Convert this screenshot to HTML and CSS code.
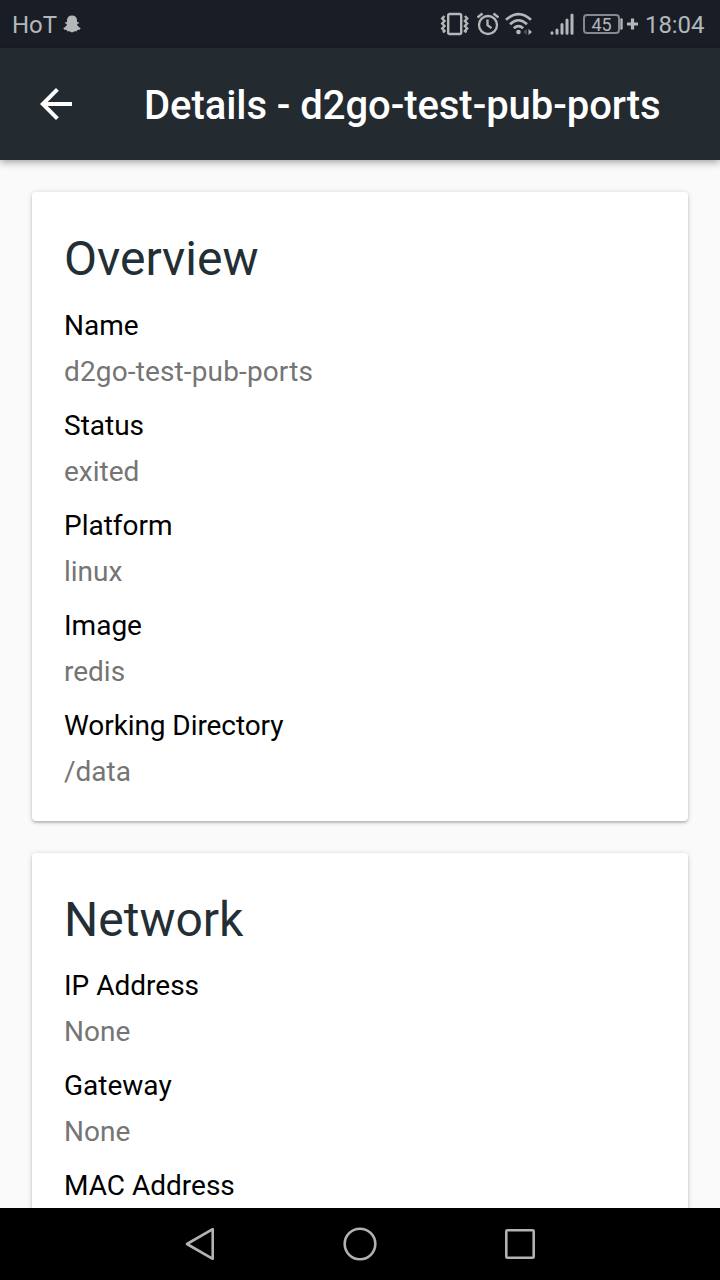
FILE: index.html
```html
<!DOCTYPE html>
<html lang="en">
<head>
<meta charset="utf-8">
<title>Details - d2go-test-pub-ports</title>
<link rel="stylesheet" href="styles.css">
</head>
<body>
<div class="screen">
  <div class="status-bar">
    <span class="carrier">HoT</span>
    <svg class="ghost" width="18" height="18" viewBox="0 0 18 18"><path fill="currentColor" d="M9 .5C6 .5 4 2.4 4 5V7.2L2 6.9L2.4 8.4L4 9.3C3.5 10.9 2.3 12.3.4 13L1 14.6L3.6 15.1L4.2 16.3H6.3L9 17.5L11.7 16.3H13.8L14.4 15.1L17 14.6L17.6 13C15.7 12.3 14.5 10.9 14 9.3L15.6 8.4L16 6.9L14 7.2V5C14 2.4 12 .5 9 .5Z"/></svg>
    <svg class="vibrate" width="30" height="24" viewBox="0 0 30 24" fill="none" stroke="currentColor" stroke-width="2.4"><rect x="8.2" y="2" width="13" height="20" rx="1.5"/><path d="M4.5 4L2.2 6.5L4.5 9L2.2 11.5L4.5 14L2.2 16.5L4.5 19L3 20.5M24.9 4L27.2 6.5L24.9 9L27.2 11.5L24.9 14L27.2 16.5L24.9 19L26.4 20.5"/></svg>
    <svg class="alarm" width="24" height="24" viewBox="0 0 24 24" fill="none" stroke="currentColor" stroke-width="2.3"><circle cx="12" cy="13" r="9"/><path d="M1.5 5.5L6.5 1.5M17.5 1.5L22.5 5.5M11.5 7.5V13.2L15.5 16.2"/></svg>
    <svg class="wifi" width="28" height="24" viewBox="0 0 28 24" fill="none" stroke="currentColor" stroke-width="2.6"><path d="M1 7.8Q13.5-3.7 26 7.8M5 12.2Q13.5 4.3 22 12.2M8.8 16.2Q13.5 12 18.2 16.2"/><circle cx="13.5" cy="20" r="2.3" fill="currentColor" stroke="none"/><path d="M23.5 17V23L27 20Z" fill="currentColor" stroke="none"/><path d="M21.7 17V23L18.5 20Z" fill="#50555b" stroke="none"/></svg>
    <svg class="signal" width="24" height="24" viewBox="0 0 24 24" fill="none" stroke="currentColor" stroke-width="3" stroke-linecap="round"><path d="M2 20.7V21.3M7 18V21.3M12 12.5V21.3M17 8V21.3M22 3V21.3"/></svg>
    <span class="battery">45</span>
    <svg class="charge" width="18" height="24" viewBox="0 0 18 24" fill="none" stroke="currentColor" stroke-linecap="round"><path stroke-width="2.4" d="M1.5 7.5V16.5"/><path stroke-width="3.2" stroke-linecap="butt" d="M7 12H18M12.5 6.5V17.5"/></svg>
    <span class="clock">18:04</span>
  </div>
  <header class="app-bar">
    <svg class="back" width="48" height="48" viewBox="0 0 24 24"><path fill="#fff" d="M20 11H7.83l5.59-5.59L12 4l-8 8 8 8 1.41-1.41L7.83 13H20v-2z"/></svg>
    <h1 class="title">Details - d2go-test-pub-ports</h1>
  </header>
  <main class="content">
    <section class="card">
      <h2 class="heading">Overview</h2>
      <dl class="fields">
        <div><dt>Name</dt><dd class="wide">d2go-test-pub-ports</dd></div>
        <div><dt>Status</dt><dd>exited</dd></div>
        <div><dt>Platform</dt><dd>linux</dd></div>
        <div><dt>Image</dt><dd>redis</dd></div>
        <div><dt class="tight">Working Directory</dt><dd>/data</dd></div>
      </dl>
    </section>
    <section class="card network">
      <h2 class="heading">Network</h2>
      <dl class="fields">
        <div><dt>IP Address</dt><dd>None</dd></div>
        <div><dt>Gateway</dt><dd>None</dd></div>
        <div><dt>MAC Address</dt></div>
      </dl>
    </section>
  </main>
  <nav class="nav-bar">
    <svg width="160" height="72" viewBox="0 0 160 72"><path d="M92.7 21.2V50.8L67 36Z"/></svg>
    <svg width="160" height="72" viewBox="0 0 160 72"><circle cx="80" cy="36" r="15.3"/></svg>
    <svg width="160" height="72" viewBox="0 0 160 72"><rect x="66.3" y="22.3" width="27.4" height="27.4" rx="1"/></svg>
  </nav>
</div>
</body>
</html>
```
FILE: styles.css
```css
* { box-sizing: border-box; }
body, h1, h2, dl, dd { margin: 0; }
body { font-family: Roboto, sans-serif; background: #fafafa; }
.screen { width: 720px; height: 1280px; display: flex; flex-direction: column; overflow: hidden; }
.status-bar { flex: 0 0 48px; display: flex; align-items: center; padding: 0 15px 0 12px; background: #191e26; color: #b4b7ba; white-space: nowrap; }
.status-bar svg { flex: none; }
.carrier { font-size: 24px; line-height: 28px; width: 45px; margin: 2px 6px 0 0; }
.vibrate { margin-left: auto; }
.alarm { margin-left: 6px; }
.wifi { margin-left: 5px; }
.signal { margin: 0 9px 0 17px; }
.battery { width: 37px; height: 20px; border: 2px solid #85898d; border-radius: 4px; font-size: 18px; line-height: 17px; text-align: center; }
.clock { width: 60px; margin: 2px 0 0 7px; font-size: 24px; line-height: 28px; letter-spacing: -.1px; }
.app-bar { flex: 0 0 112px; display: flex; align-items: center; padding-left: 32px; background: #232a30; box-shadow: 0 2px 8px rgba(0, 0, 0, .38); z-index: 1; }
.title { margin: 4px 0 0 64px; color: #fff; font-size: 40px; font-weight: 500; letter-spacing: -.06px; line-height: 48px; white-space: nowrap; }
.content { flex: 1; min-height: 0; overflow: hidden; display: flex; flex-direction: column; gap: 32px; padding: 32px; }
.card { flex: none; padding: 32px 32px 26px; background: #fff; border-radius: 4px; box-shadow: 0 1px 5px rgba(0, 0, 0, .2), 0 2px 2px rgba(0, 0, 0, .14); }
.heading { margin-bottom: 9px; color: #232e35; font-size: 48px; font-weight: 400; line-height: 70px; }
.network .heading { margin-bottom: 8px; }
.fields { display: grid; gap: 8px; font-size: 28px; line-height: 46px; }
.fields dt { color: #000; }
.fields dd { color: #757575; }
.fields .wide { letter-spacing: .14px; }
.fields .tight { letter-spacing: -.08px; }
.nav-bar { flex: 0 0 72px; display: flex; justify-content: center; background: #000; z-index: 1; }
.nav-bar svg { fill: none; stroke: #b2b2b2; stroke-width: 2.6; stroke-linejoin: round; }
```
